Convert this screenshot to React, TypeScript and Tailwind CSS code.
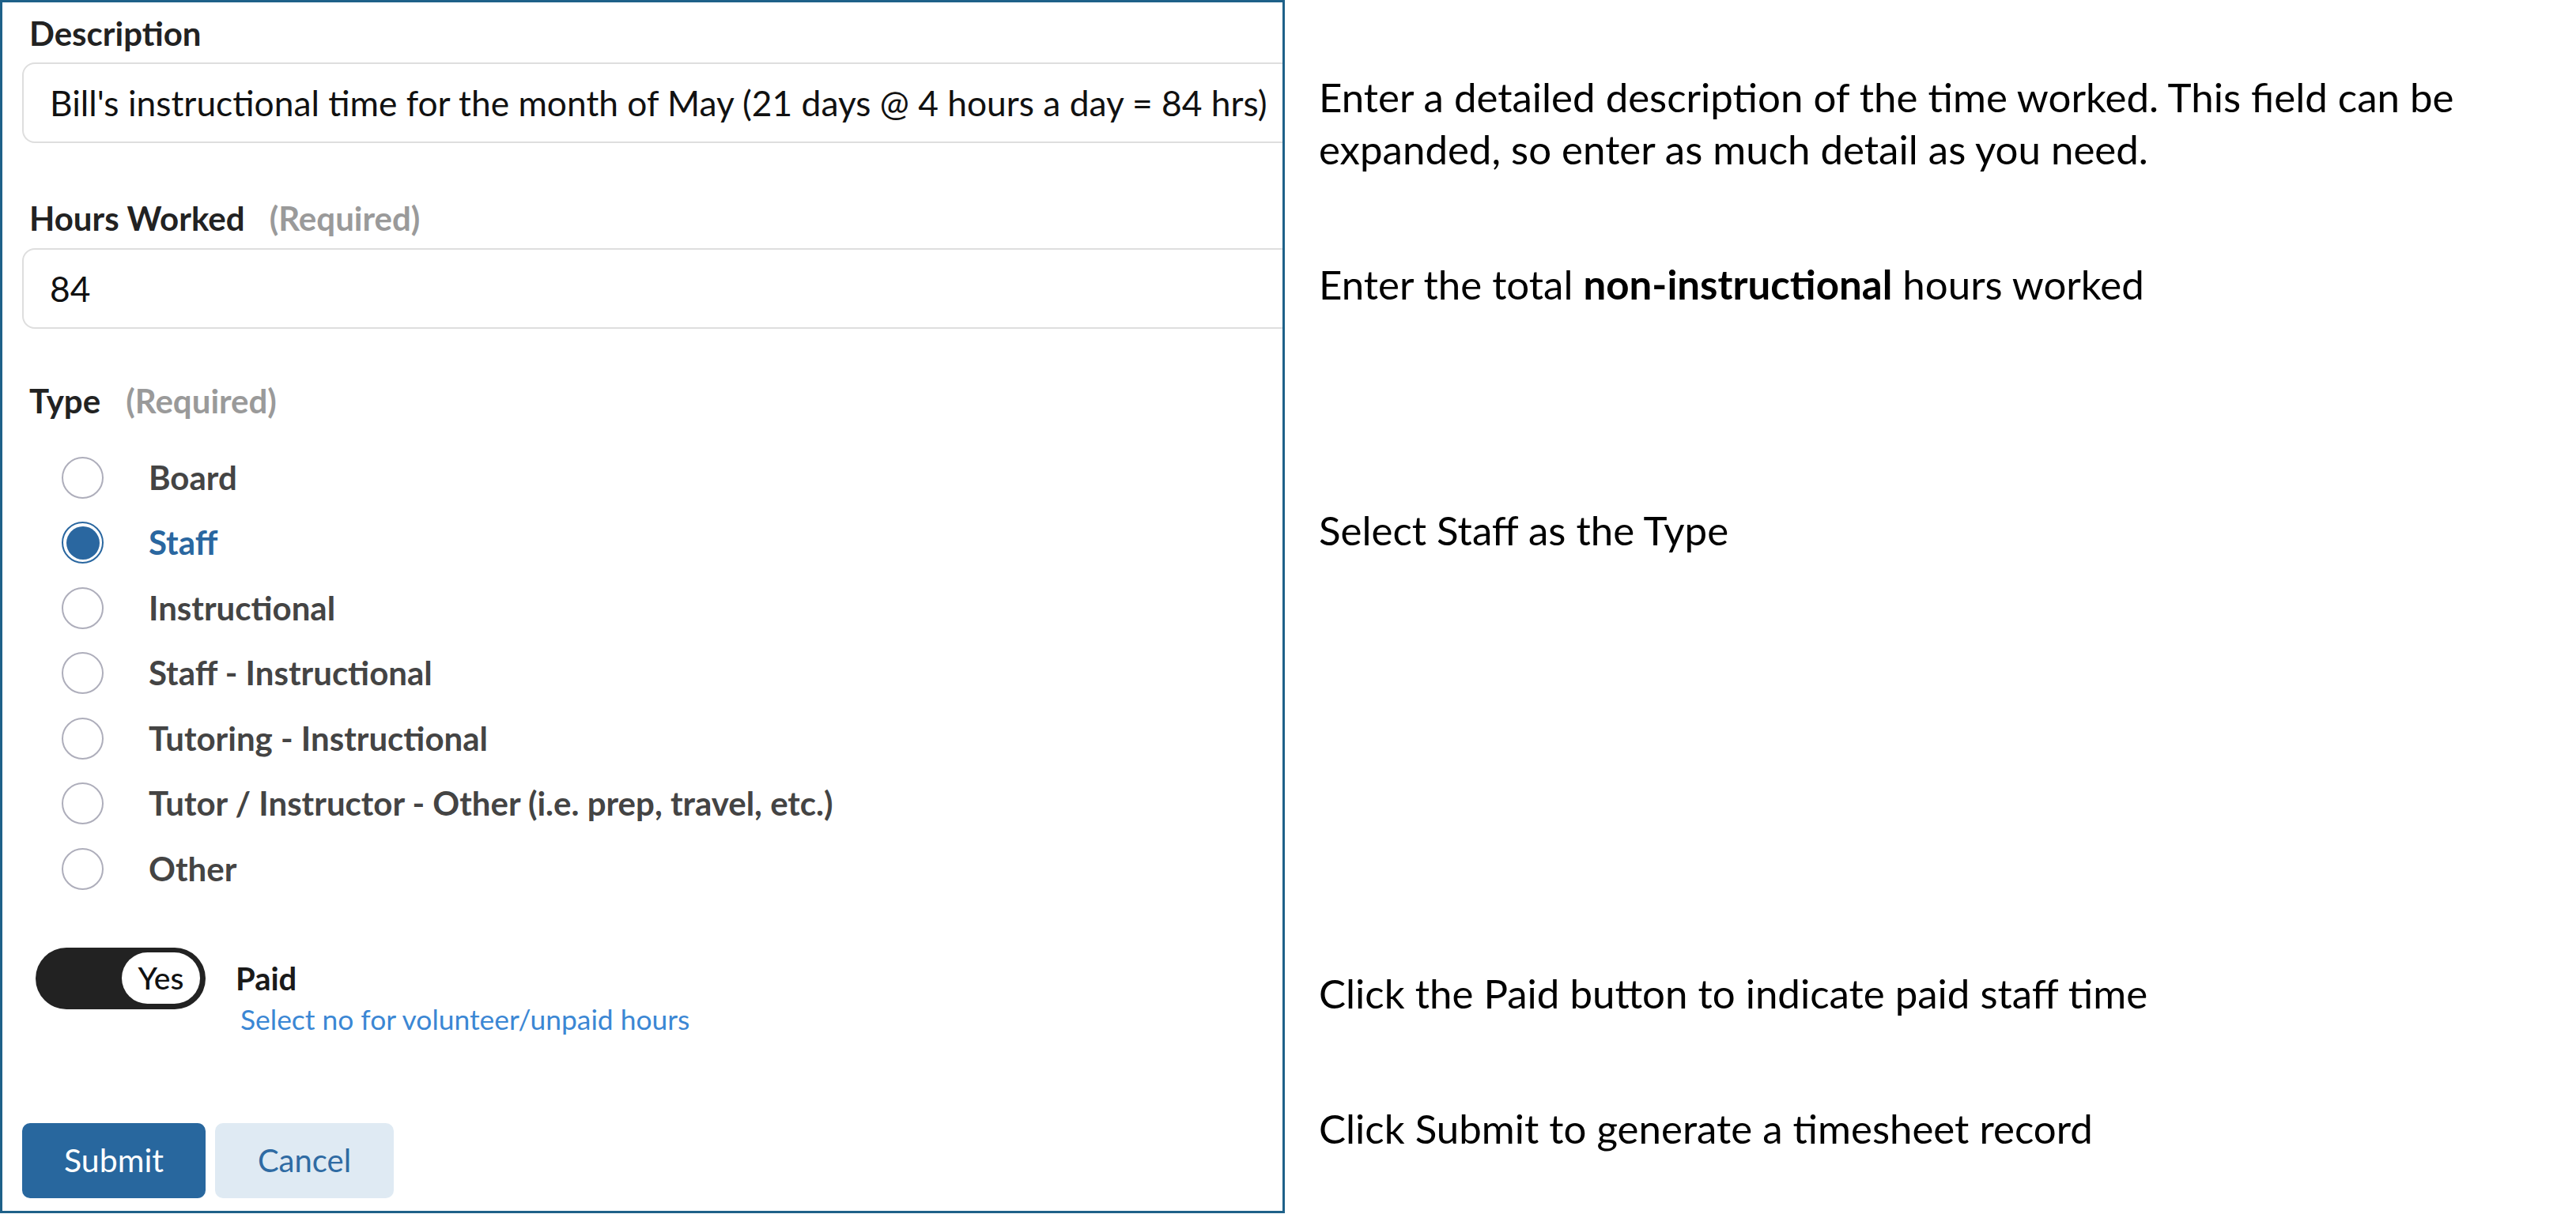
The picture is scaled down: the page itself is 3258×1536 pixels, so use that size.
import { useState } from "react";

const types = [
  "Board",
  "Staff",
  "Instructional",
  "Staff - Instructional",
  "Tutoring - Instructional",
  "Tutor / Instructor - Other (i.e. prep, travel, etc.)",
  "Other",
];

const RadioRow = ({ label, checked, onSelect }) => {
  return (
    <div className="flex items-center h-[82.5px] shrink-0 cursor-pointer" onClick={onSelect}>
      {checked ? (
        <div className="w-[53px] h-[53px] rounded-full border-[2px] border-[#2a67a0] bg-white flex items-center justify-center">
          <div className="w-[42px] h-[42px] rounded-full bg-[#2a67a0]" />
        </div>
      ) : (
        <div className="w-[53px] h-[53px] rounded-full border-[2px] border-[#aeaebb] bg-white" />
      )}
      <span
        className={`ml-[57px] text-[42px] font-bold ${checked ? "text-[#2a67a0]" : "text-[#444]"}`}
      >
        {label}
      </span>
    </div>
  );
};

const Note = ({ className, children }) => (
  <p className={`text-[51px] leading-[66px] text-black ${className}`}>{children}</p>
);

const App = () => {
  const [type, setType] = useState("Staff");
  const [paid, setPaid] = useState(true);

  return (
    <div className="flex w-[3258px] h-[1536px] bg-white font-['Lato',sans-serif]">
      <div className="w-[1625px] h-[1535px] shrink-0 border-[3px] border-[#1e6189] overflow-hidden flex flex-col">
        <label className="mt-[15px] ml-[34px] h-[48px] shrink-0 leading-[48px] text-[42px] font-bold text-[#222]">
          Description
        </label>
        <div className="mt-[13px] ml-[25px] w-[1700px] h-[102px] shrink-0 rounded-[16px] border-[2px] border-[#dedede] flex items-center pl-[33px]">
          <span className="text-[44.3px] text-[#111] whitespace-nowrap">
            Bill's instructional time for the month of May (21 days @ 4 hours a day = 84 hrs)
          </span>
        </div>

        <label className="mt-[71px] ml-[34px] h-[48px] shrink-0 leading-[48px] text-[42px] font-bold text-[#222]">
          Hours Worked <span className="ml-[21px] text-[#9a9a9a]">(Required)</span>
        </label>
        <div className="mt-[14px] ml-[25px] w-[1700px] h-[102px] shrink-0 rounded-[16px] border-[2px] border-[#dedede] flex items-center pl-[33px]">
          <span className="text-[44.3px] text-[#111]">84</span>
        </div>

        <label className="mt-[67px] ml-[34px] h-[48px] shrink-0 leading-[48px] text-[42px] font-bold text-[#222]">
          Type <span className="ml-[22px] text-[#9a9a9a]">(Required)</span>
        </label>
        <div className="mt-[32px] ml-[75px] flex flex-col shrink-0">
          {types.map((t) => (
            <RadioRow key={t} label={t} checked={type === t} onSelect={() => setType(t)} />
          ))}
        </div>

        <div className="mt-[58px] ml-[42px] flex items-start shrink-0">
          <button
            onClick={() => setPaid(!paid)}
            className="w-[215px] h-[78px] shrink-0 rounded-full bg-[#222] flex items-center justify-end pr-[7px]"
          >
            <span className="w-[99px] h-[65px] rounded-full bg-white flex items-center justify-center text-[39px] font-medium text-[#111]">
              {paid ? "Yes" : "No"}
            </span>
          </button>
          <div className="ml-[38px] mt-[15px] flex flex-col">
            <span className="h-[48px] leading-[48px] text-[40px] font-bold text-[#1a1a1a]">Paid</span>
            <span className="ml-[6px] mt-[6px] h-[44px] leading-[44px] text-[35.4px] text-[#3b87d4]">
              Select no for volunteer/unpaid hours
            </span>
          </div>
        </div>

        <div className="mt-[109px] ml-[25px] flex gap-[12px] shrink-0">
          <button className="w-[232px] h-[95px] rounded-[10px] bg-[#28679e] text-white text-[41px]">
            Submit
          </button>
          <button className="w-[226px] h-[95px] rounded-[10px] bg-[#dfeaf3] text-[#2f6ba3] text-[40px]">
            Cancel
          </button>
        </div>
      </div>

      <div className="ml-[43px] flex flex-col">
        <Note className="mt-[90px]">
          Enter a detailed description of the time worked. This field can be
          <br />
          expanded, so enter as much detail as you need.
        </Note>
        <Note className="mt-[105px]">
          Enter the total <span className="font-bold">non-instructional</span> hours worked
        </Note>
        <Note className="mt-[245px]">Select Staff as the Type</Note>
        <Note className="mt-[520px]">Click the Paid button to indicate paid staff time</Note>
        <Note className="mt-[105px]">Click Submit to generate a timesheet record</Note>
      </div>
    </div>
  );
};

export default App;
